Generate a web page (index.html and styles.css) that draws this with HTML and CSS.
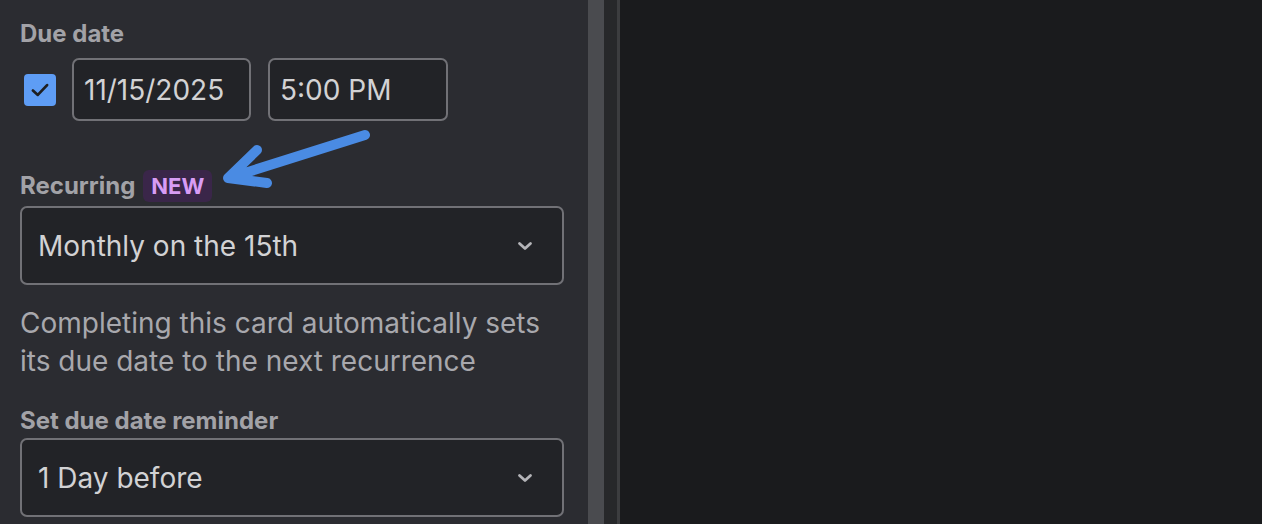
FILE: index.html
```html
<!DOCTYPE html>
<html>
<head>
<meta charset="utf-8">
<link rel="stylesheet" href="styles.css">
</head>
<body>
<div class="app">
  <aside class="panel">
    <div class="label">Due date</div>
    <div class="date-row">
      <span class="checkbox">
        <svg class="check" width="24" height="24" viewBox="0 0 22 22"><path d="M4.5 11.5l4.5 4L17.5 6.5" fill="none" stroke="#1e1f22" stroke-width="2.5" stroke-linecap="round" stroke-linejoin="round"/></svg>
      </span>
      <div class="input date">11/15/2025</div>
      <div class="input time">5:00 PM</div>
    </div>
    <div class="label recurring">Recurring <span class="badge">NEW</span></div>
    <div class="select">
      <span>Monthly on the 15th</span>
      <svg width="18" height="18" viewBox="0 0 18 18"><path d="M3.5 6.5l5.5 5 5.5-5" fill="none" stroke="#b4b4b8" stroke-width="2.8" stroke-linecap="round" stroke-linejoin="round"/></svg>
    </div>
    <p class="help">Completing this card automatically sets its due date to the next recurrence</p>
    <div class="label reminder">Set due date reminder</div>
    <div class="select">
      <span>1 Day before</span>
      <svg width="18" height="18" viewBox="0 0 18 18"><path d="M3.5 6.5l5.5 5 5.5-5" fill="none" stroke="#b4b4b8" stroke-width="2.8" stroke-linecap="round" stroke-linejoin="round"/></svg>
    </div>
    <svg class="arrow" width="165" height="70" viewBox="0 0 165 70"><path d="M150 10 L14 53 M42 25 L13 53 L52 58" fill="none" stroke="#4a8be3" stroke-width="10" stroke-linecap="round" stroke-linejoin="round"/></svg>
  </aside>
  <div class="scrollbar"></div>
  <div class="gutter"></div>
  <div class="divider"></div>
  <main class="main"></main>
</div>
</body>
</html>
```
FILE: styles.css
```css
html, body {
  margin: 0;
  padding: 0;
  height: 100%;
  background: #1a1b1d;
  font-family: Inter, "Noto Sans", sans-serif;
  overflow: hidden;
}
.app {
  display: flex;
  height: 524px;
}
.panel {
  position: relative;
  width: 588px;
  box-sizing: border-box;
  background: #2b2c31;
  padding: 20px 24px 0 20px;
}
.scrollbar { width: 16px; background: #4a4b4f; }
.gutter { width: 13px; background: #27282a; }
.divider { width: 3px; background: #3c3d3f; }
.main { flex: 1; background: #1a1b1d; }
.label {
  color: #a2a2a7;
  font-weight: 700;
  font-size: 24px;
  line-height: 28px;
  display: flex;
  align-items: center;
  gap: 8px;
}
.date-row {
  display: flex;
  align-items: center;
  gap: 17px;
  margin-top: 10px;
}
.checkbox {
  width: 32px;
  height: 32px;
  margin-left: 4px;
  margin-right: -1px;
  background: #5e9df5;
  border-radius: 4px;
  display: flex;
  align-items: center;
  justify-content: center;
}
.check { flex: none; }
.input {
  height: 63px;
  box-sizing: border-box;
  border: 2px solid #717176;
  border-radius: 7px;
  background: #222327;
  color: #d2d2d4;
  font-size: 28px;
  display: flex;
  align-items: center;
  padding-left: 10px;
}
.date { width: 179px; }
.time { width: 180px; }
.recurring {
  margin-top: 49px;
  height: 32px;
}
.badge {
  background: #3a2649;
  color: #d89cf5;
  font-size: 22px;
  font-weight: 700;
  border-radius: 6px;
  padding: 0 8px;
  line-height: 32px;
}
.arrow {
  position: absolute;
  left: 215px;
  top: 125px;
}
.select {
  margin-top: 4px;
  width: 544px;
  height: 79px;
  box-sizing: border-box;
  border: 2px solid #717176;
  border-radius: 7px;
  background: #222327;
  color: #d2d2d4;
  font-size: 28px;
  display: flex;
  align-items: center;
  justify-content: space-between;
  padding: 0 28px 0 16px;
}
.help {
  margin: 19px 0 0 0;
  color: #a8a8ad;
  font-size: 28px;
  line-height: 38px;
  width: 543px;
}
.reminder {
  margin-top: 27px;
}
.reminder + .select { margin-top: 3px; }
```
